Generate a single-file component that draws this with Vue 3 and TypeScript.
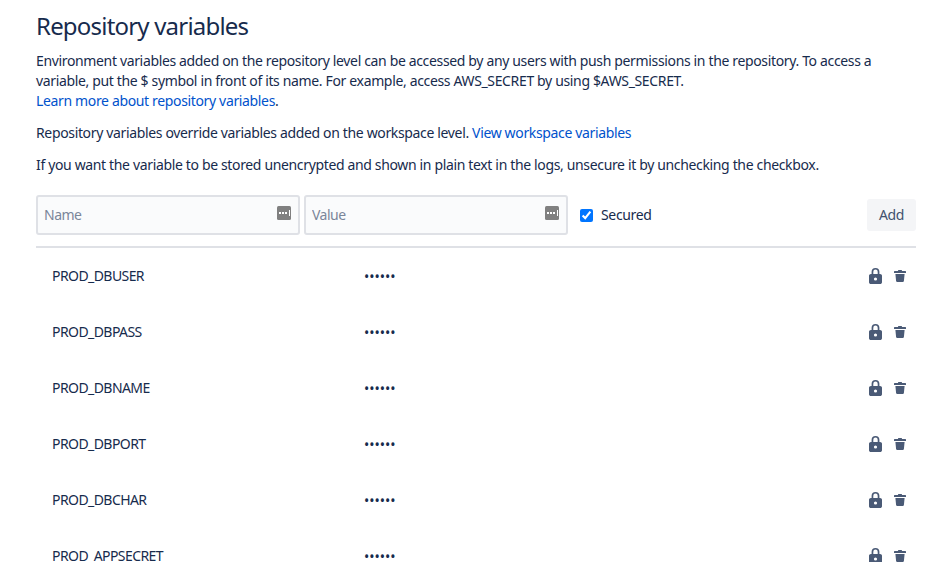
<script setup lang="ts">
const rows = [
  'PROD_DBUSER',
  'PROD_DBPASS',
  'PROD_DBNAME',
  'PROD_DBPORT',
  'PROD_DBCHAR',
  'PROD_APPSECRET',
]
</script>

<template>
  <div class="page">
    <h2>Repository variables</h2>
    <p class="intro">
      Environment variables added on the repository level can be accessed by any users with push permissions in the repository. To access a variable, put the $ symbol in front of its name. For example, access AWS_SECRET by using $AWS_SECRET.<br />
      <a href="#">Learn more about repository variables</a>.
    </p>
    <p>Repository variables override variables added on the workspace level. <a href="#">View workspace variables</a></p>
    <p>If you want the variable to be stored unencrypted and shown in plain text in the logs, unsecure it by unchecking the checkbox.</p>

    <form class="add-form" @submit.prevent>
      <div class="field">
        <input type="text" placeholder="Name" />
        <svg class="dots" width="14" height="14" viewBox="0 0 14 14">
          <rect width="14" height="14" rx="1.5" fill="#808080" />
          <rect x="2" y="6" width="2" height="2" fill="#fff" />
          <rect x="5" y="6" width="2" height="2" fill="#fff" />
          <rect x="8" y="6" width="2" height="2" fill="#fff" />
          <rect x="12" y="4" width="1" height="6" fill="#fff" />
        </svg>
      </div>
      <div class="field">
        <input type="text" placeholder="Value" />
        <svg class="dots" width="14" height="14" viewBox="0 0 14 14">
          <rect width="14" height="14" rx="1.5" fill="#808080" />
          <rect x="2" y="6" width="2" height="2" fill="#fff" />
          <rect x="5" y="6" width="2" height="2" fill="#fff" />
          <rect x="8" y="6" width="2" height="2" fill="#fff" />
          <rect x="12" y="4" width="1" height="6" fill="#fff" />
        </svg>
      </div>
      <label class="secured">
        <input type="checkbox" checked />
        Secured
      </label>
      <button type="button" class="add">Add</button>
    </form>

    <div class="rows">
      <div v-for="name in rows" :key="name" class="row">
        <span class="name">{{ name }}</span>
        <span class="value">••••••</span>
        <span class="actions">
          <svg width="13" height="16" viewBox="0 0 13 16">
            <path
              fill="#4a5a76"
              fill-rule="evenodd"
              d="M2.600 6V3.800a3.900 3.800 0 0 1 7.800 0V6h.7c1 0 1.900.8 1.900 1.800v6.400c0 1-.9 1.800-1.900 1.800H1.900C.9 16 0 15.200 0 14.200V7.800C0 6.800.9 6 1.900 6h.7zm1.700 0h4.400V3.800a2.200 2.200 0 0 0-4.400 0V6zm2.200 3.400a1.600 1.600 0 1 0 0 3.200 1.600 1.600 0 0 0 0-3.200z"
            />
          </svg>
          <svg width="12" height="12" viewBox="0 0 12 12">
            <path
              fill="#4a5a76"
              d="M4 .6c0-.3.300-.6.600-.6h2.800c.3 0 .6.300.6.600V1h3.400c.3 0 .6.300.6.600V3H0V1.600C0 1.300.300 1 .6 1H4V.6zM1.400 4h9.200l-.7 7c-.1.600-.5 1-1.100 1H3.200c-.6 0-1-.4-1.100-1L1.400 4z"
            />
          </svg>
        </span>
      </div>
    </div>
  </div>
</template>

<style>
html,
body {
  margin: 0;
  overflow: hidden;
  background: #fff;
}
</style>

<style scoped>
.page {
  box-sizing: border-box;
  width: 926px;
  height: 562px;
  overflow: hidden;
  padding: 10px 10px 0 36px;
  font-family: 'Noto Sans', sans-serif;
  font-size: 14px;
  line-height: 20px;
  letter-spacing: -0.35px;
  color: #172b4d;
}

h2 {
  margin: 0 0 9px;
  font-size: 24px;
  font-weight: 400;
  line-height: 32px;
  letter-spacing: -0.8px;
}

p {
  margin: 0 0 12px;
}

a {
  color: #0052cc;
  text-decoration: none;
}

.add-form {
  display: flex;
  align-items: center;
  gap: 4px;
  margin-top: 20px;
  padding-bottom: 11px;
  border-bottom: 2px solid #dfe1e6;
}

.field {
  position: relative;
  width: 264px;
  height: 40px;
}

.field input {
  box-sizing: border-box;
  width: 100%;
  height: 100%;
  padding: 0 30px 2px 6px;
  border: 2px solid #dfe1e6;
  border-radius: 3px;
  background: #fafbfc;
  font: inherit;
  letter-spacing: -0.5px;
  color: inherit;
  outline: none;
}

.field input::placeholder {
  color: #7a869a;
  opacity: 1;
}

.dots {
  position: absolute;
  top: 11px;
  right: 9px;
}

.secured {
  display: flex;
  align-items: center;
  gap: 8px;
  margin-left: 8px;
}

.secured input {
  width: 13px;
  height: 13px;
  margin: 0;
}

.add {
  margin-left: auto;
  width: 49px;
  height: 32px;
  padding: 0;
  border: none;
  border-radius: 3px;
  background: #f4f5f7;
  font: inherit;
  letter-spacing: inherit;
  color: #42526e;
}

.row {
  display: flex;
  align-items: center;
  height: 56px;
  padding: 0 10px 0 16px;
}

.name {
  width: 312px;
  letter-spacing: -0.57px;
}

.value {
  flex: 1;
  padding-top: 2px;
  letter-spacing: normal;
}

.actions {
  display: flex;
  align-items: center;
  gap: 12px;
}

.actions svg {
  display: block;
}
</style>
